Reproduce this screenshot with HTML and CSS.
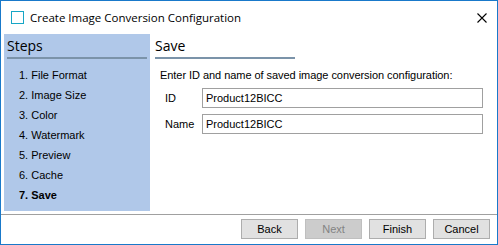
FILE: index.html
```html
<!DOCTYPE html>
<html lang="en">
<head>
  <meta charset="UTF-8" />
  <title>Create Image Conversion Configuration</title>
  <link rel="stylesheet" href="styles.css">
</head>
<body>
  <div class="window">
    <div class="titlebar">
      <span class="app-icon"></span>
      <span class="title">Create Image Conversion Configuration</span>
      <svg class="close" width="10" height="10" viewBox="0 0 10 10">
        <path d="M0.5 0.5 L9.5 9.5 M9.5 0.5 L0.5 9.5" stroke="#000" stroke-width="1.1" fill="none"/>
      </svg>
    </div>

    <div class="main">
      <div class="steps">
        <div class="heading">Steps</div>
        <ol class="step-list">
          <li>1. File Format</li>
          <li>2. Image Size</li>
          <li>3. Color</li>
          <li>4. Watermark</li>
          <li>5. Preview</li>
          <li>6. Cache</li>
          <li class="current">7. Save</li>
        </ol>
      </div>

      <div class="page">
        <div class="heading">Save</div>
        <p class="intro">Enter ID and name of saved image conversion configuration:</p>
        <div class="field">
          <label for="cfg-id">ID</label>
          <input type="text" id="cfg-id" value="Product12BICC">
        </div>
        <div class="field">
          <label for="cfg-name">Name</label>
          <input type="text" id="cfg-name" value="Product12BICC">
        </div>
      </div>
    </div>

    <div class="footer">
      <button class="btn">Back</button>
      <button class="btn" disabled>Next</button>
      <button class="btn">Finish</button>
      <button class="btn">Cancel</button>
    </div>
  </div>
</body>
</html>
```

FILE: styles.css
```css
:root {
  --frame: #1979ca;
  --panel: #b0c8e9;
  --rule: #7b93a9;
  --line: #a0a0a0;
}

* {
  box-sizing: border-box;
  margin: 0;
  padding: 0;
}

body {
  font-family: "Liberation Sans", Arial, sans-serif;
  font-size: 11px;
  color: #000;
  background: #fff;
}

.window {
  width: 498px;
  height: 245px;
  border: 1px solid var(--frame);
  display: flex;
  flex-direction: column;
}

.titlebar {
  height: 33px;
  display: flex;
  align-items: center;
  padding: 0 9px 0 10px;
}

.app-icon {
  width: 13px;
  height: 13px;
  border: 1px solid #17a6c6;
  margin-right: 6px;
}

.title {
  font-family: "Open Sans", sans-serif;
  font-size: 11.5px;
  flex: 1;
}

.close {
  margin-right: 1px;
}

.main {
  display: flex;
  height: 177px;
  padding: 0 3px;
}

.steps {
  width: 146px;
  background: var(--panel);
  padding: 0 3px;
}

.heading {
  font-family: "Open Sans", sans-serif;
  font-size: 14px;
  height: 25px;
  line-height: 23px;
  border-bottom: 2px solid var(--rule);
  width: 140px;
}

.step-list {
  list-style: none;
  padding: 6px 0 0 12px;
}

.step-list li {
  height: 20px;
  line-height: 20px;
}

.step-list .current {
  font-weight: bold;
}

.page {
  flex: 1;
  padding-left: 5px;
}

.intro {
  margin: 9px 0 0 5px;
  line-height: 14px;
  letter-spacing: -0.05px;
}

.field {
  display: flex;
  align-items: center;
  margin-top: 6px;
  padding-left: 10px;
}

.field label {
  width: 37px;
}

.field input {
  width: 281px;
  height: 20px;
  border: 1px solid #a0a0a0;
  padding: 0 3px;
  font-family: inherit;
  font-size: 11px;
  color: #000;
}

.footer {
  flex: 1;
  border-top: 1px solid var(--line);
  margin-top: 3px;
  display: flex;
  justify-content: flex-end;
  align-items: flex-start;
  gap: 7px;
  padding: 4px 7px 0 0;
}

.btn {
  width: 57px;
  height: 20px;
  background: #e1e1e1;
  border: 1px solid #adadad;
  font-family: inherit;
  font-size: 11px;
  color: #000;
}

.btn:disabled {
  background: #cccccc;
  border-color: #bfbfbf;
  color: #838383;
}
```
